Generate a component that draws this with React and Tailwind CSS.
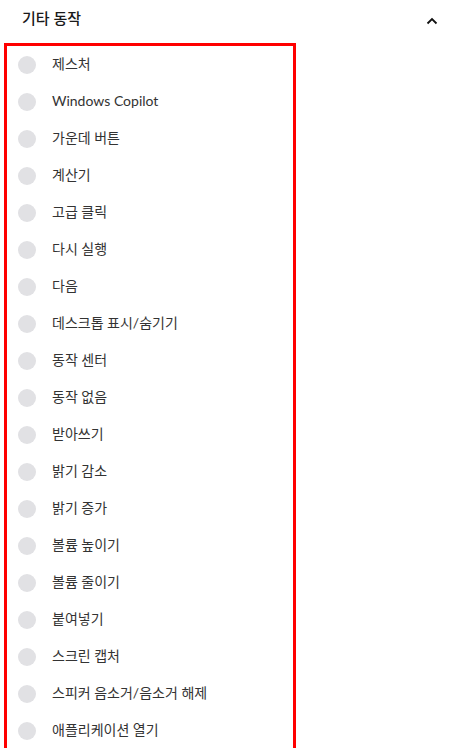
import React from "react";

const items = [
  "제스처",
  "Windows Copilot",
  "가운데 버튼",
  "계산기",
  "고급 클릭",
  "다시 실행",
  "다음",
  "데스크톱 표시/숨기기",
  "동작 센터",
  "동작 없음",
  "받아쓰기",
  "밝기 감소",
  "밝기 증가",
  "볼륨 높이기",
  "볼륨 줄이기",
  "붙여넣기",
  "스크린 캡처",
  "스피커 음소거/음소거 해제",
  "애플리케이션 열기",
];

export default function App() {
  return (
    <div
      className="w-[466px] h-[748px] overflow-hidden bg-white"
      style={{ fontFamily: 'Lato, "Noto Sans CJK KR", sans-serif' }}
    >
      <div className="h-[37px] flex items-center justify-between pl-[22px] pr-[28px]">
        <span className="text-[15px] font-medium text-[#1a1a1a]">기타 동작</span>
        <svg width="12" height="8" viewBox="0 0 12 8" className="mt-[4px]">
          <path d="M1.5 6.5 L6 2 L10.5 6.5" fill="none" stroke="#111" strokeWidth="1.8" />
        </svg>
      </div>
      <div className="ml-[4px] mt-[6px] w-[292px] border-[3px] border-[#ff0000]">
        {items.map((t) => (
          <div key={t} className="h-[37px] flex items-center pl-[11px] gap-[16px]">
            <div className="w-[18px] h-[18px] rounded-full bg-[#e1e1e4] shrink-0" />
            <span className="text-[14px] font-normal text-[#333333] leading-none pb-[1px]">{t}</span>
          </div>
        ))}
      </div>
    </div>
  );
}
